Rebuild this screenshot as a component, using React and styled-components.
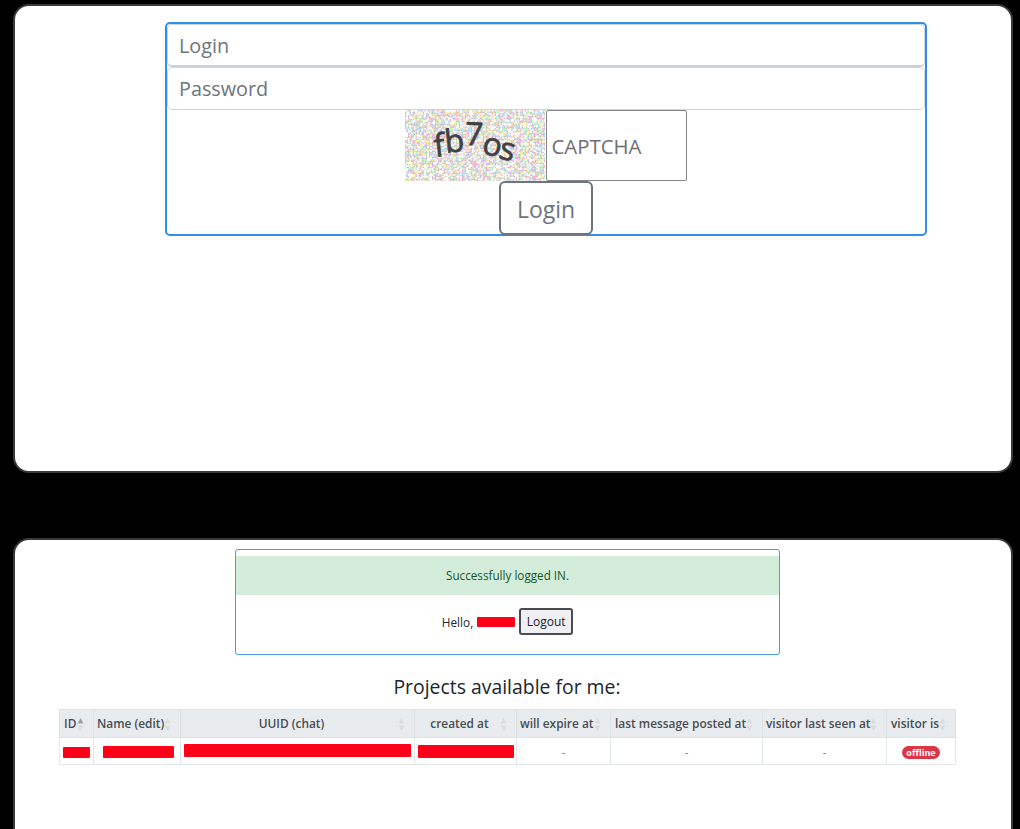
import React from "react";
import styled, { createGlobalStyle } from "styled-components";

const GlobalStyle = createGlobalStyle`
  html, body {
    margin: 0;
    height: 100%;
    background: #000000;
    overflow: hidden;
  }
  * {
    box-sizing: border-box;
  }
`;

const Page = styled.div`
  height: 829px;
  overflow: hidden;
  padding: 4px 7px 0 13px;
  display: flex;
  flex-direction: column;
  gap: 65px;
  font-family: "Open Sans", "Liberation Sans", sans-serif;
`;

const Panel = styled.section`
  flex: ${(props) => (props.$grow ? "1 0 auto" : "0 0 auto")};
  height: ${(props) => (props.$grow ? "auto" : "469px")};
  margin-bottom: ${(props) => (props.$grow ? "-30px" : "0")};
  background: #ffffff;
  border: 2px solid #3a3a3c;
  border-radius: 16px;
  padding: ${(props) => (props.$grow ? "9px 44px 0" : "16px 84px 0 150px")};
`;

const LoginForm = styled.form`
  height: 214px;
  border: 2px solid #2f8fe6;
  border-radius: 5px;
  display: flex;
  flex-direction: column;
  align-items: center;
`;

const TextInput = styled.div`
  width: 100%;
  height: 43px;
  flex: 0 0 43px;
  padding: 0 11px;
  display: flex;
  align-items: center;
  background: #ffffff;
  border: 1px solid #ced4da;
  border-bottom: ${(props) => (props.$first ? "2px solid #c6d2dd" : "1px solid #ced4da")};
  border-radius: 5px;
  color: #6c757d;
  font-size: 19.8px;
`;

const CaptchaRow = styled.div`
  display: flex;
  height: 71px;
  flex: 0 0 71px;
  width: 282px;
`;

const CaptchaInput = styled.div`
  width: 141px;
  height: 71px;
  margin-left: 1px;
  padding-left: 4px;
  display: flex;
  align-items: center;
  border: 1px solid #85858a;
  border-radius: 2px;
  color: #6f6f73;
  font-size: 20.4px;
`;

const LoginButton = styled.div`
  width: 94px;
  height: 54px;
  flex: 0 0 54px;
  padding-top: 2px;
  display: flex;
  align-items: center;
  justify-content: center;
  background: #ffffff;
  border: 2px solid #6c7480;
  border-radius: 6px;
  color: #6c757d;
  font-size: 23px;
`;

const SessionBox = styled.div`
  width: 545px;
  height: 106px;
  margin-left: 176px;
  border: 1px solid #4a9ce8;
  border-radius: 3px;
  padding-top: 6px;
`;

const Alert = styled.div`
  height: 39px;
  padding-bottom: 1px;
  display: flex;
  align-items: center;
  justify-content: center;
  background: #d4edda;
  color: #155724;
  font-size: 11.7px;
`;

const HelloRow = styled.div`
  margin-top: 13px;
  display: flex;
  align-items: center;
  justify-content: center;
  color: #212529;
  font-size: 11.8px;
`;

const Redacted = styled.span`
  display: block;
  width: ${(props) => props.$width}px;
  height: ${(props) => props.$height || 12}px;
  margin-left: ${(props) => props.$left || 0}px;
  margin-top: ${(props) => props.$top || 0}px;
  background: #ff0019;
  border-radius: 1px;
`;

const LogoutButton = styled.div`
  width: 54px;
  height: 27px;
  margin-left: 4px;
  display: flex;
  align-items: center;
  justify-content: center;
  background: #efeff4;
  border: 2px solid #4b4b4f;
  border-radius: 3px;
  color: #212529;
  font-size: 12px;
`;

const Title = styled.h2`
  margin: 20px 0 10px;
  padding-right: 12px;
  height: 24px;
  line-height: 24px;
  text-align: center;
  color: #212529;
  font-size: 19.4px;
  font-weight: 400;
`;

const Table = styled.table`
  width: 896px;
  table-layout: fixed;
  border-collapse: collapse;
  font-size: 11.9px;
  color: #212529;
`;

const HeadCell = styled.th`
  position: relative;
  height: 28px;
  padding: ${(props) => (props.$pad ? `0 0 2px ${props.$pad}px` : "0 12px 2px 0")};
  background: #e9ecef;
  border: 1px solid #dee2e6;
  text-align: ${(props) => (props.$pad ? "left" : "center")};
  font-weight: 600;
  color: #484d53;
  white-space: nowrap;
`;

const Cell = styled.td`
  height: 27px;
  padding: 0;
  border: 1px solid #e4e7ea;
  text-align: center;
  color: #6c757d;
  font-size: 11px;
`;

const BarCell = styled.div`
  display: flex;
  align-items: center;
  height: 100%;
`;

const SortIcon = styled.svg`
  position: absolute;
  right: 9px;
  top: 7px;
`;

const Badge = styled.span`
  display: inline-block;
  padding: 0 4px;
  height: 13px;
  line-height: 13px;
  border-radius: 7px;
  background: #dc3545;
  color: #ffffff;
  font-size: 9px;
  font-weight: 700;
`;

const columns = [
  { label: "ID", width: 34, pad: 4, active: true },
  { label: "Name (edit)", width: 87, pad: 3 },
  { label: "UUID (chat)", width: 234 },
  { label: "created at", width: 102 },
  { label: "will expire at", width: 94, pad: 3 },
  { label: "last message posted at", width: 152, pad: 4 },
  { label: "visitor last seen at", width: 124, pad: 3 },
  { label: "visitor is", width: 69, pad: 4 },
];

function SortArrows({ active }) {
  return (
    <SortIcon width="7" height="15" viewBox="0 0 7 15">
      <path d="M3.5 1 L6.5 6.5 L0.5 6.5 Z" fill={active ? "#9aa0a6" : "#d9dce0"} />
      <path d="M3.5 14 L6.5 8.5 L0.5 8.5 Z" fill="#d9dce0" />
    </SortIcon>
  );
}

// noise behind the captcha letters, same seed so the picture never changes
function captchaNoise() {
  const colors = ["#f08cc4", "#8cdcf0", "#f4ea7c", "#a4ee9c", "#bda4f0", "#f4b088", "#b4b4c0", "#ffffff", "#ffffff", "#ffffff"];
  const dots = [];
  let seed = 7;
  const next = () => {
    seed = (seed * 16807) % 2147483647;
    return seed;
  };
  for (let y = 0; y < 71; y += 1.5) {
    for (let x = 0; x < 141; x += 1.5) {
      dots.push(<rect key={x + "-" + y} x={x} y={y} width="1.5" height="1.5" fill={colors[next() % colors.length]} />);
    }
  }
  return dots;
}

function Captcha() {
  const letters = [
    { ch: "f", x: 30, y: 47, r: -6 },
    { ch: "b", x: 41, y: 43, r: -6 },
    { ch: "7", x: 60, y: 35, r: 2 },
    { ch: "o", x: 76, y: 43, r: 14 },
    { ch: "s", x: 93, y: 48, r: 14 },
  ];
  return (
    <svg width="141" height="71" viewBox="0 0 141 71">
      <g opacity="0.8">{captchaNoise()}</g>
      {letters.map((l) => (
        <text
          key={l.ch}
          x={l.x}
          y={l.y}
          transform={`rotate(${l.r} ${l.x} ${l.y})`}
          fontFamily="'Open Sans', sans-serif"
          fontSize="32"
          stroke="#3f4145"
          strokeWidth="0.7"
          fill="#3f4145"
        >
          {l.ch}
        </text>
      ))}
    </svg>
  );
}

export default function App() {
  return (
    <Page>
      <GlobalStyle />
      <Panel>
        <LoginForm>
          <TextInput $first>Login</TextInput>
          <TextInput>Password</TextInput>
          <CaptchaRow>
            <Captcha />
            <CaptchaInput>CAPTCHA</CaptchaInput>
          </CaptchaRow>
          <LoginButton>Login</LoginButton>
        </LoginForm>
      </Panel>
      <Panel $grow>
        <SessionBox>
          <Alert>Successfully logged IN.</Alert>
          <HelloRow>
            Hello,
            <Redacted $width={38} $height={10} $left={4} />
            <LogoutButton>Logout</LogoutButton>
          </HelloRow>
        </SessionBox>
        <Title>Projects available for me:</Title>
        <Table>
          <colgroup>
            {columns.map((c) => (
              <col key={c.label} width={c.width} />
            ))}
          </colgroup>
          <thead>
            <tr>
              {columns.map((c) => (
                <HeadCell key={c.label} $pad={c.pad}>
                  {c.label}
                  <SortArrows active={c.active} />
                </HeadCell>
              ))}
            </tr>
          </thead>
          <tbody>
            <tr>
              <Cell><BarCell><Redacted $width={27} $height={11} $left={3} $top={2} /></BarCell></Cell>
              <Cell><BarCell><Redacted $width={71} $left={9} $top={2} /></BarCell></Cell>
              <Cell><BarCell><Redacted $width={227} $height={13} $left={3} $top={-2} /></BarCell></Cell>
              <Cell><BarCell><Redacted $width={96} $height={13} $left={3} /></BarCell></Cell>
              <Cell>-</Cell>
              <Cell>-</Cell>
              <Cell>-</Cell>
              <Cell><Badge>offline</Badge></Cell>
            </tr>
          </tbody>
        </Table>
      </Panel>
    </Page>
  );
}
